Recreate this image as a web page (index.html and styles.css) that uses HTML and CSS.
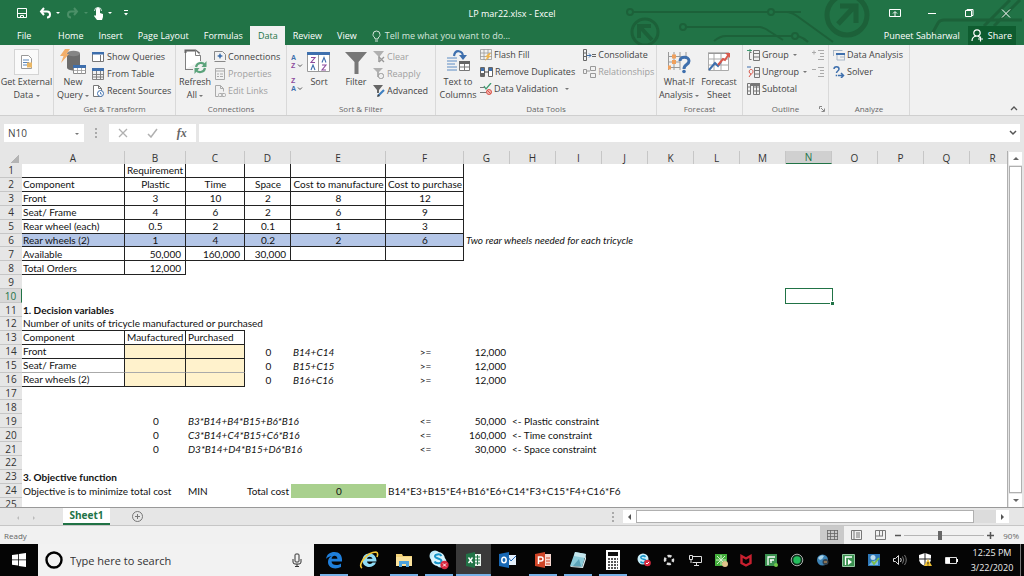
FILE: index.html
```html
<!DOCTYPE html>
<html lang="en">
<head>
<meta charset="utf-8">
<title>LP mar22.xlsx - Excel</title>
<link rel="stylesheet" href="styles.css">
</head>
<body>
<div class="desktop">
  <header class="top">
    <svg class="circuit" width="424" height="45" viewBox="600 0 424 45" fill="none" stroke="#1c6139" stroke-width="2" aria-hidden="true">
      <circle cx="630" cy="12" r="3"/><path d="M633 12h168M804 12"/><circle cx="771" cy="12" r="3" fill="#217346"/><path d="M788 12q5 1 9 4l36 26"/>
      <circle cx="683" cy="27" r="3"/><path d="M686 27h74q5 1 9 4l14 9M714 41q6-5 12-5h66M798 36q6 2 10 6"/><circle cx="795" cy="36" r="3"/>
      <g stroke-width="3"><circle cx="645" cy="32" r="13"/><path d="M652 40l-11-12M639 38V26h12" stroke-width="4"/></g>
      <g stroke-width="5"><circle cx="847" cy="15" r="20"/><path d="M838 24l16-17M840 6h16v17"/></g>
      <path d="M932 34l6-11q2-3 6-3h78M984 26l26-26M994 26l26-26" stroke-width="3"/>
    </svg>
    <div class="titlebar">
      <div class="quick">
        <button aria-label="Save"><svg width="12" height="12" viewBox="0 0 12 12" fill="none" stroke="#fff"><path d="M1.5 1.500h9v9h-9zM2 6.500h8M4.500 11V8.500h3V11"/></svg></button>
        <button aria-label="Undo"><svg width="22" height="12" viewBox="0 0 22 12" fill="none" stroke="#fff" stroke-width="2"><path d="M5 1L2 4.500 5 8M2 4.500h6c4 0 4 6 0 6"/><path d="M17 5h4l-2 2z" fill="#fff" stroke="none"/></svg></button>
        <button aria-label="Redo"><svg width="22" height="12" viewBox="0 0 22 12" fill="none" stroke="#4b9068" stroke-width="2"><path d="M8 1l3 3.500L8 8M11 4.500H5c-4 0-4 6 0 6"/><path d="M18 5h4l-2 2z" fill="#4b9068" stroke="none"/></svg></button>
        <button aria-label="Touch mode"><svg width="20" height="13" viewBox="0 0 20 13" fill="#fff"><path d="M3 2.500a2 2 0 0 1 4 0V6l3 1v3l-1 3H4L1 9l1-1 1 1z"/><path d="M1.500 4a3.500 3.500 0 0 1 7 0" fill="none" stroke="#fff" stroke-width=".8"/><path d="M15 5h4l-2 2z"/></svg></button>
        <button aria-label="Customize toolbar"><svg width="6" height="8" viewBox="0 0 6 8" fill="#fff"><path d="M1 1h4v1H1zM1 4h4L3 6.500z"/></svg></button>
      </div>
      <h1 class="title">LP mar22.xlsx - Excel</h1>
      <div class="window-buttons">
        <button aria-label="Ribbon display options"><svg width="12" height="10" viewBox="0 0 12 10" fill="none" stroke="#fff"><path d="M.5 1.500h11v7H.5zM6 8V4M4 5.500l2-2 2 2"/></svg></button>
        <button aria-label="Minimize"><svg width="10" height="10" viewBox="0 0 10 10"><path d="M1 5.500h8" stroke="#fff"/></svg></button>
        <button aria-label="Restore"><svg width="10" height="10" viewBox="0 0 10 10" fill="none" stroke="#fff"><path d="M1.500 2.500h6v6h-6zM3 2.500v-1h6v6H8"/></svg></button>
        <button aria-label="Close"><svg width="10" height="10" viewBox="0 0 10 10" stroke="#fff"><path d="M1 1.500l8 8M9 1.500l-8 8"/></svg></button>
      </div>
    </div>
    <nav class="tabs">
      <button class="tab file">File</button>
      <button class="tab">Home</button>
      <button class="tab">Insert</button>
      <button class="tab">Page Layout</button>
      <button class="tab">Formulas</button>
      <button class="tab active">Data</button>
      <button class="tab">Review</button>
      <button class="tab">View</button>
      <button class="tab tell"><svg width="9" height="12" viewBox="0 0 9 12" fill="none" stroke="#d5e6dc"><path d="M3 9V8C1.500 6.500 1 6 1 4.500a3.500 3.500 0 0 1 7 0C8 6 7.500 6.500 6 8v1zM3 11h3"/></svg>Tell me what you want to do...</button>
      <span class="user">Puneet Sabharwal</span>
      <button class="share"><svg width="13" height="13" viewBox="0 0 13 13" fill="none" stroke="#fff" stroke-width="1.200"><circle cx="6" cy="4" r="3.200"/><path d="M1 12q0-4 4-5M7 7l2 1.500M9.500 7.500v5M7 10h5"/></svg>Share</button>
    </nav>
  </header>

  <section class="ribbon" aria-label="Data ribbon">
    <div class="group g-external">
      <div class="tools">
        <button class="big"><span class="frame"><svg width="13" height="16" viewBox="0 0 13 16" fill="none" stroke="#999"><path d="M1.500 1.500h7l3 3v10h-10z" fill="#fff"/><path d="M3 6h6M3 8.500h6M3 11h4" stroke="#5b86b8"/><path d="M7 8.500h5v5H7z" fill="#eab765" stroke="none"/></svg></span><span>Get External<br>Data <i class="caret"></i></span></button>
      </div>
    </div>
    <div class="group g-transform">
      <div class="tools">
        <button class="big"><svg width="28" height="26" viewBox="0 0 28 26"><path d="M8 4.500v14c0 4 13 4 13 0v-14z" fill="#6d6d6d"/><ellipse cx="14.500" cy="4.500" rx="6.500" ry="2.700" fill="#858585"/><path d="M6 0h5L7.500 5H10L2 14l2.500-7H1z" fill="#f2ae6a"/><path d="M14.500 16.500h12v8h-12z" fill="#fff" stroke="#8a8a8a"/><path d="M14 16h13v3H14z" fill="#3e6fad"/><path d="M18.500 19v6M22.500 19v6M15 21.500h12" stroke="#999" stroke-width=".8"/></svg><span>New<br>Query <i class="caret"></i></span></button>
        <div class="column">
          <button class="small"><svg width="13" height="12" viewBox="0 0 13 12" fill="none"><path d="M.5 1.500h11v9H.5z" fill="#fff" stroke="#777"/><path d="M0 1h12v2.500H0z" fill="#3e6fad"/><path d="M8.500 4v6" stroke="#777"/></svg>Show Queries</button>
          <button class="small"><svg width="13" height="12" viewBox="0 0 13 12" fill="none"><path d="M.5 1.500h11v10H.5zM4.500 2v9M8.500 2v9M1 6.500h11M1 9h11" stroke="#777" stroke-width=".9"/><path d="M0 0h12v3H0z" fill="#3e6fad"/></svg>From Table</button>
          <button class="small"><svg width="13" height="12" viewBox="0 0 13 12" fill="#fff" stroke="#777"><path d="M1.500.5h5l3 3v8h-8zM6.500.5v3h3"/><circle cx="8.500" cy="8.500" r="3" stroke="#3e6fad"/><path d="M8.500 7v2H10" stroke="#3e6fad" stroke-width=".8"/></svg>Recent Sources</button>
        </div>
      </div>
      <h2>Get &amp; Transform</h2>
    </div>
    <div class="group g-connections">
      <div class="tools">
        <button class="big"><svg width="26" height="26" viewBox="0 0 26 26" fill="#fff" stroke="#808080"><path d="M3.500 20V1.500h10l5 5V12M3 20.500h8"/><path d="M3.500 4V1.500h10l4 3" fill="none" stroke="#666" stroke-width="2"/><path d="M13.500 1.500v5h5"/><g fill="none" stroke="#5ba37b" stroke-width="2.200"><path d="M14 18c1-5 7-5 9-2M23 19c-1 5-7 5-9 2"/></g><path d="M24.500 12v6h-5zM12.500 25v-6h5z" fill="#5ba37b" stroke="none"/></svg><span>Refresh<br>All <i class="caret"></i></span></button>
        <div class="column">
          <button class="small"><svg width="12" height="12" viewBox="0 0 12 12" fill="none"><path d="M.5 9V.5h8l3 3V9M.5 10.500h11" stroke="#888"/><path d="M6 2l1 2 2 1-2 1-1 2-1-2-2-1 2-1z" fill="#3e6fad"/></svg>Connections</button>
          <button class="small off"><svg width="12" height="12" viewBox="0 0 12 12" fill="none" stroke="#aaa"><path d="M1.500.5h9v11h-9zM1 3h9" /><path d="M3 6h2M6 6h3M3 8.500h2M6 8.500h3"/></svg>Properties</button>
          <button class="small off"><svg width="12" height="12" viewBox="0 0 12 12" fill="none" stroke="#aaa"><path d="M1.500.5h5l3 3v3M1.500.5v11h3M6.500.5v3h3"/><rect x="4.500" y="8.500" width="4" height="3" rx="1"/><rect x="7.500" y="8.500" width="4" height="3" rx="1"/></svg>Edit Links</button>
        </div>
      </div>
      <h2>Connections</h2>
    </div>
    <div class="group g-sort">
      <div class="tools">
        <div class="orders">
          <button aria-label="Sort A to Z"><svg width="12" height="17" viewBox="0 0 12 17"><text x="0" y="7" fill="#3e6fad">A</text><text x="0" y="15" fill="#8c4a9c">Z</text><path d="M7 11.500l2 2 2-2" fill="none" stroke="#555"/></svg></button>
          <button aria-label="Sort Z to A"><svg width="12" height="17" viewBox="0 0 12 17"><text x="0" y="7" fill="#8c4a9c">Z</text><text x="0" y="15" fill="#3e6fad">A</text><path d="M7 11.500l2 2 2-2" fill="none" stroke="#555"/></svg></button>
        </div>
        <button class="big sort"><svg width="24" height="26" viewBox="0 0 24 26"><path d="M.5 3.500h22v19H.5zM11.500 4v18" fill="#fff" stroke="#9a9a9a"/><path d="M0 3h23v3H0z" fill="#3e6fad"/><g fill="none" stroke-width="1.100"><path d="M4 8.500h4l-4 5h4M15 16h4l-4 5h4" stroke="#8c4a9c"/><path d="M4 21l2-5 2 5M15 13.500l2-5 2 5" stroke="#3e6fad"/></g></svg><span>Sort</span></button>
        <button class="big filter"><svg width="24" height="26" viewBox="0 0 24 26"><path d="M1 3h22l-8.500 10v12h-4V13z" fill="#777"/></svg><span>Filter</span></button>
        <div class="column">
          <button class="small off"><svg width="12" height="12" viewBox="0 0 12 12"><path d="M0 0h11L7 5v6H5V5z" fill="#b0b0b0"/><path d="M6 6l5 5M11 6l-5 5" stroke="#999" stroke-width="1.300"/></svg>Clear</button>
          <button class="small off"><svg width="12" height="12" viewBox="0 0 12 12"><path d="M0 0h10L6 4v5H4V4z" fill="#b0b0b0"/><rect x="5.500" y="5.500" width="5" height="5" rx="2" fill="#eee" stroke="#999"/></svg>Reapply</button>
          <button class="small"><svg width="12" height="12" viewBox="0 0 12 12"><path d="M0 0h10L6 5v3H4V5z" fill="#666"/><path d="M11 5l-6 6" stroke="#3e7fc0" stroke-width="2.200"/><path d="M5 9l-1 3 3-1z" fill="#444"/></svg>Advanced</button>
        </div>
      </div>
      <h2>Sort &amp; Filter</h2>
    </div>
    <div class="group g-tools">
      <div class="tools">
        <button class="big"><svg width="26" height="26" viewBox="0 0 26 26" fill="none"><path d="M2 9h10M2 12h10M2 15h8M2 18h10M2 21h10" stroke="#5c8cc4"/><path d="M9 7c1-7 9-6 9 1" stroke="#3e6fad" stroke-width="2.200"/><path d="M14 6h8l-4 5z" fill="#3e6fad"/><path d="M14.500 13.500h10v8h-10zM19.500 14v7M15 18h10" fill="#fff" stroke="#777"/><path d="M14 12h11v3H14z" fill="#666"/></svg><span>Text to<br>Columns</span></button>
        <div class="column tight">
          <button class="small"><svg width="12" height="12" viewBox="0 0 12 12" fill="none" stroke="#999"><path d="M.5.500h11v10H.500zM4 0v11M8 0v11M0 4h12M0 7.500h12" stroke-width=".8"/><path d="M9 4l-4 4h2l-2 4 6-5H9l2-3z" fill="#eeb44f" stroke="none"/></svg>Flash Fill</button>
          <button class="small"><svg width="13" height="12" viewBox="0 0 13 12"><path d="M.5 1.500h4v9h-4zM8.500 1.500h4v9h-4z" fill="#fff" stroke="#666"/><path d="M1 2h3v3H1zM9 2h3v3H9z" fill="#3e6fad"/><path d="M1 7h3v3H1z" fill="#666"/><path d="M4 6h5" stroke="#444"/></svg>Remove Duplicates</button>
          <button class="small"><svg width="12" height="12" viewBox="0 0 12 12" fill="none"><path d="M0 4.500h5M0 9.500h6" stroke="#777"/><path d="M4 3l2 3 5-6" stroke="#3f9b71" stroke-width="1.300"/><circle cx="9" cy="9" r="2.500" fill="#f4b6b0" stroke="#d8544b"/><path d="M7 7l4 4" stroke="#d8544b"/></svg>Data Validation&nbsp;&nbsp;<i class="caret"></i></button>
        </div>
        <div class="column tight">
          <button class="small"><svg width="13" height="12" viewBox="0 0 13 12" fill="none"><path d="M.5.500h3v11h-3zM1 4h3M1 7.500h3M9 5.500h4M9 7.500h4" stroke="#666"/><path d="M4 6.500h4M6 4.500l2 2-2 2" stroke="#3e6fad"/></svg>Consolidate</button>
          <button class="small off"><svg width="13" height="12" viewBox="0 0 13 12" fill="none" stroke="#999"><path d="M.5 3.500h3v4h-3zM7.500.500h5v4h-5zM7.500 7.500h5v4h-5zM4 5h3"/></svg>Relationships</button>
        </div>
      </div>
      <h2>Data Tools</h2>
    </div>
    <div class="group g-forecast">
      <div class="tools">
        <button class="big"><svg width="26" height="26" viewBox="0 0 26 26" fill="none"><path d="M2.500 3v18M8 3v18M14 3v18M20 3v7M2 7.500h19M2 13h12M2 18.500h12" stroke="#999"/><path d="M6 5.500h4v4H6zM6 11h4v4H6zM2 16.500h3v4H2z" fill="#f0a05c"/><path d="M14 12c0-5 9-5 9 0 0 4-5 3-5 8" stroke="#3e6fad" stroke-width="3"/><circle cx="18" cy="22.500" r="1.800" fill="#3e6fad"/></svg><span>What-If<br>Analysis <i class="caret"></i></span></button>
        <button class="big"><svg width="24" height="26" viewBox="0 0 24 26" fill="none"><path d="M1.500 4.500h20v17h-20zM7 5v16M14 5v16M2 10h20M2 16h20" fill="#fff" stroke="#aaa"/><path d="M1 4h21" stroke="#888"/><path d="M2 21l6-7 3 3 3-4" stroke="#3e6fad" stroke-width="2"/><path d="M11 16l5-6 2 1 4-6" stroke="#d9594c" stroke-width="2"/><path d="M18 4h5v5z" fill="#d9594c"/></svg><span>Forecast<br>Sheet</span></button>
      </div>
      <h2>Forecast</h2>
    </div>
    <div class="group g-outline">
      <div class="tools">
        <div class="column tight">
          <button class="small"><svg width="13" height="12" viewBox="0 0 13 12" fill="none" stroke="#777"><path d="M6.500 1.500h6v10h-6zM6 4.500h6M6 8h6M4.500 3.500h-2v7h2"/><path d="M0 1.500h5M3 0v3" stroke="#3f9b71"/></svg>Group&nbsp; <i class="caret"></i></button>
          <button class="small"><svg width="13" height="12" viewBox="0 0 13 12" fill="none" stroke="#777"><path d="M7.500 1.500h5v10h-5zM7 4.500h5M7 8h5"/><path d="M0 1h4" stroke="#3e6fad"/><path d="M2 11l2-3C1 7 2 3 4.500 3.500S6 8 4 8" stroke="#d9594c"/></svg>Ungroup&nbsp; <i class="caret"></i></button>
          <button class="small"><svg width="13" height="12" viewBox="0 0 13 12" fill="none" stroke="#777"><path d="M.5.500h3v11h-3zM1 4h3M1 8h3M6.500.500h6v11h-6zM9.500 3v9M6 4h7M6 8h7"/><path d="M4 0h9v3H4z" fill="#777" stroke="none"/></svg>Subtotal</button>
        </div>
        <div class="column tight detail">
          <button class="small" aria-label="Show detail"><svg width="12" height="12" viewBox="0 0 12 12" stroke="#aaa"><path d="M0 3.500h4M2 1.500v4M6 1.500h6M8 4.500h4M8 7.500h4M6 10.500h6"/></svg></button>
          <button class="small" aria-label="Hide detail"><svg width="12" height="12" viewBox="0 0 12 12" stroke="#aaa"><path d="M0 3.500h4M6 1.500h6M8 4.500h4M8 7.500h4M6 10.500h6"/></svg></button>
        </div>
      </div>
      <h2>Outline</h2>
      <button class="launcher" aria-label="Outline settings"><svg width="6" height="6" viewBox="0 0 6 6" stroke="#888" fill="none"><path d="M.500 3V.500H3M2 2l3 3M5.500 2.500v3h-3"/></svg></button>
    </div>
    <div class="group g-analyze">
      <div class="tools">
        <div class="column tight">
          <button class="small"><svg width="12" height="12" viewBox="0 0 12 12" fill="none"><path d="M.500 1.500h9M.500 1v6M4 4v7M4 11h8M11.500 5v6M7 8h4" stroke="#a9b8c8"/><path d="M3 4h9v2H3z" fill="#3e6fad"/></svg>Data Analysis</button>
          <button class="small"><svg width="12" height="12" viewBox="0 0 12 12" fill="none" stroke="#3e6fad" stroke-width="1.500"><path d="M1 3c0-3 5-3 5 0 0 2-2.500 2-2.500 4M2.700 9.500h1.500M5 9.500h5M8 7l2.500 2.500L8 12"/></svg>Solver</button>
        </div>
      </div>
      <h2>Analyze</h2>
    </div>
    <button class="collapse" aria-label="Collapse ribbon"><svg width="8" height="6" viewBox="0 0 8 6" fill="none" stroke="#555" stroke-width="1.300"><path d="M1 5l3-3 3 3"/></svg></button>
  </section>

  <section class="formula-bar">
    <div class="name-box"><input aria-label="Name box" value="N10"><button aria-label="Open names"><i class="caret"></i></button></div>
    <span class="dots" aria-hidden="true"></span>
    <div class="entry">
      <button aria-label="Cancel"><svg width="10" height="10" viewBox="0 0 10 10" stroke="#b0b0b0" stroke-width="1.300"><path d="M1 1l8 8M9 1L1 9"/></svg></button>
      <button aria-label="Enter"><svg width="11" height="10" viewBox="0 0 11 10" fill="none" stroke="#b0b0b0" stroke-width="1.500"><path d="M1 6l3 3 6-8"/></svg></button>
      <button class="fx" aria-label="Insert function">fx</button>
    </div>
    <div class="formula"><input aria-label="Formula"><button aria-label="Expand formula bar"><svg width="8" height="6" viewBox="0 0 8 6" fill="none" stroke="#555" stroke-width="1.500"><path d="M1 1l3 3 3-3"/></svg></button></div>
  </section>

  <main class="workbook">
    <div class="viewport">
      <table class="sheet">
        <colgroup><col class="w-head"><col class="w-a"><col class="w-b"><col class="w-c"><col class="w-d"><col class="w-e"><col class="w-f"><col class="w-std" span="12"></colgroup>
        <thead><tr><th class="corner"></th><th>A</th><th>B</th><th>C</th><th>D</th><th>E</th><th>F</th><th>G</th><th>H</th><th>I</th><th>J</th><th>K</th><th>L</th><th>M</th><th class="current">N</th><th>O</th><th>P</th><th>Q</th><th>R</th></tr></thead>
        <tbody>
          <tr class="boxed"><th>1</th><td></td><td>Requirement</td><td></td><td></td><td></td><td></td></tr>
          <tr class="boxed mid"><th>2</th><td>Component</td><td>Plastic</td><td>Time</td><td>Space</td><td>Cost to manufacture</td><td>Cost to purchase</td></tr>
          <tr class="boxed mid"><th>3</th><td>Front</td><td>3</td><td>10</td><td>2</td><td>8</td><td>12</td></tr>
          <tr class="boxed mid"><th>4</th><td>Seat/ Frame</td><td>4</td><td>6</td><td>2</td><td>6</td><td>9</td></tr>
          <tr class="boxed mid"><th>5</th><td>Rear wheel (each)</td><td>0.5</td><td>2</td><td>0.1</td><td>1</td><td>3</td></tr>
          <tr class="boxed mid blue"><th>6</th><td>Rear wheels (2)</td><td>1</td><td>4</td><td>0.2</td><td>2</td><td>6</td><td class="note formula-text">Two rear wheels needed for each tricycle</td></tr>
          <tr class="boxed"><th>7</th><td>Available</td><td class="num">50,000</td><td class="num">160,000</td><td class="num">30,000</td><td></td><td></td></tr>
          <tr class="boxed"><th>8</th><td>Total Orders</td><td class="num">12,000</td></tr>
          <tr><th>9</th></tr>
          <tr class="current"><th>10</th><td colspan="13"></td><td class="selected"><span class="handle"></span></td></tr>
          <tr><th>11</th><td class="strong">1. Decision variables</td></tr>
          <tr class="above-box"><th>12</th><td>Number of units of tricycle manufactured or purchased</td><td></td><td></td></tr>
          <tr class="boxed"><th>13</th><td>Component</td><td>Maufactured</td><td>Purchased</td></tr>
          <tr class="vars"><th>14</th><td>Front</td><td class="cream"></td><td class="cream"></td><td class="center">0</td><td class="formula-text">B14+C14</td><td class="center">&gt;=</td><td class="num">12,000</td></tr>
          <tr class="vars soft"><th>15</th><td>Seat/ Frame</td><td class="cream"></td><td class="cream"></td><td class="center">0</td><td class="formula-text">B15+C15</td><td class="center">&gt;=</td><td class="num">12,000</td></tr>
          <tr class="vars"><th>16</th><td>Rear wheels (2)</td><td class="cream"></td><td class="cream"></td><td class="center">0</td><td class="formula-text">B16+C16</td><td class="center">&gt;=</td><td class="num">12,000</td></tr>
          <tr><th>17</th></tr>
          <tr><th>18</th></tr>
          <tr><th>19</th><td></td><td class="center">0</td><td class="formula-text" colspan="3">B3*B14+B4*B15+B6*B16</td><td class="center">&lt;=</td><td class="num">50,000</td><td>&lt;- Plastic constraint</td></tr>
          <tr><th>20</th><td></td><td class="center">0</td><td class="formula-text" colspan="3">C3*B14+C4*B15+C6*B16</td><td class="center">&lt;=</td><td class="num">160,000</td><td>&lt;- Time constraint</td></tr>
          <tr><th>21</th><td></td><td class="center">0</td><td class="formula-text" colspan="3">D3*B14+D4*B15+D6*B16</td><td class="center">&lt;=</td><td class="num">30,000</td><td>&lt;- Space constraint</td></tr>
          <tr><th>22</th></tr>
          <tr><th>23</th><td class="strong">3. Objective function</td></tr>
          <tr><th>24</th><td colspan="2">Objective is to minimize total cost</td><td>MIN</td><td>Total cost</td><td class="center green">0</td><td>B14*E3+B15*E4+B16*E6+C14*F3+C15*F4+C16*F6</td></tr>
          <tr><th>25</th></tr>
        </tbody>
      </table>
    </div>
    <div class="vscroll">
      <button aria-label="Scroll up"><i class="caret up"></i></button>
      <div class="thumb"></div>
      <button aria-label="Scroll down"><i class="caret down"></i></button>
    </div>
  </main>

  <div class="sheet-bar">
    <div class="sheet-nav"><button aria-label="Previous sheet"><i class="caret left"></i></button><button aria-label="Next sheet"><i class="caret right"></i></button></div>
    <button class="sheet-tab">Sheet1</button>
    <button class="add" aria-label="New sheet"><svg width="11" height="11" viewBox="0 0 11 11" fill="none" stroke="#777"><circle cx="5.500" cy="5.500" r="5"/><path d="M5.500 3v5M3 5.500h5"/></svg></button>
    <span class="dots" aria-hidden="true"></span>
    <div class="hscroll">
      <button aria-label="Scroll left"><i class="caret left"></i></button>
      <div class="thumb"></div>
      <button aria-label="Scroll right"><i class="caret right"></i></button>
    </div>
  </div>

  <footer class="status">
    <span class="ready">Ready</span>
    <button class="view on" aria-label="Normal view"><svg width="11" height="10" viewBox="0 0 11 10" fill="none" stroke="#666"><path d="M0 .500h11M0 3.500h11M0 6.500h11M0 9.500h11M.500 0v10M3.500 0v10M7.500 0v10M10.500 0v10" stroke-width=".8"/></svg></button>
    <button class="view" aria-label="Page layout view"><svg width="11" height="10" viewBox="0 0 11 10" fill="none" stroke="#777"><path d="M.500.500h10v9H.500zM3 .500v9M5 3h4M5 5h4M5 7h4"/></svg></button>
    <button class="view" aria-label="Page break view"><svg width="11" height="10" viewBox="0 0 11 10" fill="none" stroke="#777"><path d="M.500.500h10v9H.500zM4.500 0v6M0 6h8M7.500 0v6"/></svg></button>
    <button class="zoom" aria-label="Zoom out"><svg width="6" height="7" viewBox="0 0 6 7"><path d="M0 3.500h6" stroke="#555" stroke-width="1.500"/></svg></button>
    <input class="slider" type="range" min="0" max="100" value="45" aria-label="Zoom">
    <button class="zoom" aria-label="Zoom in"><svg width="7" height="7" viewBox="0 0 7 7" stroke="#555" stroke-width="1.500"><path d="M0 3.500h7M3.500 0v7"/></svg></button>
    <span class="percent">90%</span>
  </footer>

  <footer class="taskbar">
    <button class="start" aria-label="Start"><svg width="14" height="14" viewBox="0 0 14 14" fill="#fff"><path d="M0 2l6-.8v5.300H0zM6.800 1L14 0v6.500H6.800zM0 7.300h6v5.300L0 11.800zM6.800 7.300H14V14l-7.200-1z"/></svg></button>
    <div class="search">
      <svg width="18" height="18" viewBox="0 0 18 18"><circle cx="9" cy="9" r="7.500" fill="none" stroke="#000" stroke-width="2.400"/></svg>
      <input aria-label="Search" placeholder="Type here to search">
      <button aria-label="Voice search"><svg width="10" height="14" viewBox="0 0 10 14" fill="none" stroke="#333"><rect x="3" y="1" width="4" height="8" rx="1"/><path d="M1 6v3q0 2 2 2h4q2 0 2-2V6M5 11v2M3 13.500h4"/></svg></button>
    </div>
    <div class="apps">
      <button class="app open" aria-label="Edge"><svg width="18" height="18" viewBox="0 0 18 18"><path d="M1 8C2 3 5 1 9.500 1 14.500 1 17 4.500 17 8.500v2H6.500c.3 4 6 4.500 9.500 2v3.500c-6 3-13 1-13-5 0-3 1.500-4.800 3.700-5.700C4 5.600 2 6.500 1 8zm5.600-.3h5.800c0-4-5.500-4-5.800 0z" fill="#1f7fdb"/></svg></button>
      <button class="app" aria-label="Internet Explorer"><svg width="20" height="18" viewBox="0 0 20 18"><path d="M10 2.500c5 0 7.500 3.300 7.500 8H8c.3 3 4.500 3 5.500 1h3.500c-2.300 6.500-13.500 6-13.500-2 0-4 2.500-7 6.500-7zM8 7.800h5.500c-.5-2.800-5.200-2.800-5.500 0z" fill="#8fdcf6"/><path d="M3 17C-2 14 8 1 17 1c2.500.5 1.500 4 1 5" fill="none" stroke="#f4c839" stroke-width="1.600"/></svg></button>
      <button class="app open" aria-label="File Explorer"><svg width="18" height="16" viewBox="0 0 18 16"><path d="M1 2h6l1 2h9v10H1z" fill="#f3d37a"/><path d="M1 5h16v9H1z" fill="#fbe39c"/><path d="M4 9h10v6h-3v-3H7v3H4z" fill="#4ea3dd"/></svg></button>
      <button class="app open" aria-label="Skype"><svg width="20" height="20" viewBox="0 0 20 20"><circle cx="6" cy="6" r="5.500" fill="#bdeafa"/><circle cx="12" cy="12" r="5.500" fill="#bdeafa"/><circle cx="9" cy="9" r="7" fill="#d9f4fd"/><path d="M12.500 6c-1.500-2.500-7-2-6.500.7.300 2 6.500 1.500 6.500 4.200 0 3-6 3-7 .6" fill="none" stroke="#1895c9" stroke-width="2"/><circle cx="15.500" cy="15" r="4.200" fill="#d8283f"/><path d="M14 13.500l3 3M17 13.500l-3 3" stroke="#fff"/></svg></button>
      <button class="app open focus" aria-label="Excel"><svg width="17" height="16" viewBox="0 0 17 16"><path d="M8 2h8v12H8z" fill="#e8f3ec"/><path d="M10 5h5M10 8h5M10 11h5M12.500 3v10" stroke="#217346"/><path d="M1 2l9-2v16l-9-2z" fill="#217346"/><path d="M3.500 5.500l4 5.500M7.500 5.500l-4 5.500" stroke="#fff" stroke-width="1.400"/></svg></button>
      <button class="app" aria-label="Outlook"><svg width="18" height="16" viewBox="0 0 18 16"><path d="M9 3h8v10H9z" fill="#e4effa"/><path d="M9 5l3 4 5-5" fill="none" stroke="#1b66b3"/><path d="M0 2l10-2v16L0 14z" fill="#1768b5"/><ellipse cx="5" cy="8" rx="2.200" ry="2.800" fill="none" stroke="#fff" stroke-width="1.500"/></svg></button>
      <button class="app open" aria-label="PowerPoint"><svg width="17" height="16" viewBox="0 0 17 16"><path d="M8 2h8v12H8z" fill="#f7d8d0"/><path d="M11 6h4M11 9h4M11 12h4" stroke="#cf4427"/><path d="M0 2l10-2v16L0 14z" fill="#cf4427"/><path d="M3.500 12V5H6q2 0 2 2T6 9H4" fill="none" stroke="#fff" stroke-width="1.500"/></svg></button>
      <button class="app open" aria-label="Notepad"><svg width="18" height="18" viewBox="0 0 18 18"><path d="M6 1l11 2-4 13-12-1z" fill="#8ccbd9"/><path d="M6 1l11 2-1 4L5 5z" fill="#c6e7ee"/><path d="M1 15l12 1 4-12 0 4-3 9-12-1z" fill="#dfeef1"/><path d="M10 8l-6 7h8z" fill="#5ba3b8"/></svg></button>
      <button class="app open" aria-label="Calculator"><svg width="14" height="20" viewBox="0 0 14 20"><path d="M0 0h14v20H0z" fill="#fff"/><path d="M2 2h10v4H2z" fill="#111"/><path d="M2 9h10M2 12h10M2 15h10M2 18h10" stroke="#222" stroke-width="1.500" stroke-dasharray="2 1"/></svg></button>
    </div>
    <div class="tray">
      <button aria-label="Skype status"><svg width="14" height="14" viewBox="0 0 14 14"><circle cx="6" cy="6" r="5.500" fill="#c9effb"/><path d="M8.500 4C7 2 3 3 4 5s5 .500 4.500 3-4 2-5 .500" fill="none" stroke="#1895c9" stroke-width="1.500"/><circle cx="10.500" cy="10" r="3.300" fill="#d8283f"/><path d="M9 10l1 1 2-2" fill="none" stroke="#fff"/></svg></button>
      <button aria-label="Sync"><svg width="12" height="12" viewBox="0 0 12 12" fill="none" stroke="#ddd" stroke-width="2.500"><circle cx="6" cy="6" r="4" stroke-dasharray="4 2.300" stroke-dashoffset="2"/></svg></button>
      <button aria-label="Display"><svg width="13" height="12" viewBox="0 0 13 12" fill="none" stroke="#ddd"><path d="M4 2.500h8.500v6H3.500M7.500 9v2M5 11.500h5M.500 1.500h3v4h-3zM2 6v3"/></svg></button>
      <button aria-label="Network tool"><svg width="14" height="14" viewBox="0 0 14 14"><path d="M1 1h12v12H1z" fill="#43ae3c"/><path d="M3 3l8 8M11 3l-8 8M7 2v10M2 7h10" stroke="#d4f2cd"/><circle cx="11" cy="11" r="3" fill="#e2c48d"/></svg></button>
      <button aria-label="McAfee"><svg width="12" height="13" viewBox="0 0 12 13"><path d="M1.500 2l4.500 2.500L10.500 2v7L6 11.500 1.500 9z" fill="none" stroke="#c8202f" stroke-width="2.400"/></svg></button>
      <button aria-label="Player server"><svg width="13" height="13" viewBox="0 0 13 13"><path d="M0 0h12v12H0z" fill="#3b9150"/><path d="M3 11V3h7M5 6h4M6 6v3" fill="none" stroke="#fff" stroke-width="1.300"/><circle cx="11" cy="11" r="2" fill="#71c948"/></svg></button>
      <button aria-label="Recorder"><svg width="14" height="14" viewBox="0 0 14 14"><circle cx="7" cy="7" r="5.800" fill="#102f1d" stroke="#aaa"/><circle cx="7" cy="7" r="3.700" fill="#24bd5c"/></svg></button>
      <button aria-label="Globe"><svg width="14" height="14" viewBox="0 0 14 14"><circle cx="6.500" cy="7" r="5.500" fill="#3d83b5"/><path d="M2 5q3-4 6-2-1 3-4 4z" fill="#a9d2e8"/><circle cx="9.500" cy="9" r="3" fill="#36424d"/><path d="M8 9h3" stroke="#e0a35a"/></svg></button>
      <button aria-label="Player"><svg width="13" height="13" viewBox="0 0 13 13"><path d="M.500.500h12v12H.500z" fill="#3b9150" stroke="#93c8a0"/><path d="M3.500 11V3H10" fill="none" stroke="#fff" stroke-width="1.300"/><path d="M6 5l4 3-4 3z" fill="#fff"/></svg></button>
      <button aria-label="Graphics"><svg width="14" height="14" viewBox="0 0 14 14"><path d="M1 1h12v12H1z" fill="#2f79b8"/><circle cx="6" cy="4.500" r="2.500" fill="#bcdcf0"/><path d="M2 12q4-6 9-4v4z" fill="#7dc0ea"/><path d="M5 8l2 3 5-6" fill="none" stroke="#7cbf4a" stroke-width="1.800"/></svg></button>
      <button aria-label="Volume"><svg width="14" height="12" viewBox="0 0 14 12" fill="none" stroke="#ddd"><path d="M.500 4.500h2l3-3v9l-3-3h-2zM7.500 4q1.500 2 0 4"/><path d="M9.500 2.500q2.500 3.500 0 7M11.500 1q3.500 5 0 10" stroke="#777"/></svg></button>
      <button aria-label="Security"><svg width="13" height="14" viewBox="0 0 13 14"><path d="M6 0l6 2v4q0 5-6 7Q0 11 0 6V2z" fill="#fff"/><path d="M6 0v13M0 6h12" stroke="#222"/><path d="M9 6l4 7H5z" fill="#f2c230"/><path d="M9 9v2M9 11.500v1" stroke="#222"/></svg></button>
      <button aria-label="Battery"><svg width="13" height="9" viewBox="0 0 13 9"><path d="M.500 1.500h11v6H.500z" fill="none" stroke="#ddd"/><path d="M1 2h4v5H1zM11.500 3H13v3h-1.500z" fill="#fff"/></svg></button>
    </div>
    <div class="clock"><time>12:25 PM</time><time>3/22/2020</time></div>
    <button class="peek" aria-label="Show desktop"></button>
  </footer>
</div>
</body>
</html>
```

FILE: styles.css
```css
* {
  box-sizing: border-box;
}

body {
  margin: 0;
  font-family: "Open Sans", "Noto Sans", sans-serif;
  font-size: 9px;
  line-height: 13px;
  color: #444;
}

button,
input {
  margin: 0;
  padding: 0;
  border: 0;
  background: none;
  color: inherit;
  font: inherit;
}

svg {
  display: block;
  flex: none;
}

h1,
h2 {
  margin: 0;
  font-weight: 400;
}

.desktop {
  display: flex;
  flex-direction: column;
  height: 100vh;
  overflow: hidden;
  background: #e6e6e6;
}

.caret {
  display: inline-block;
  vertical-align: middle;
  border: 2px solid transparent;
  border-top-color: #777;
  border-bottom: 0;
}

.caret.up {
  border: 3px solid transparent;
  border-bottom-color: #666;
  border-top: 0;
}

.caret.down {
  border: 3px solid transparent;
  border-top-color: #666;
  border-bottom: 0;
}

.caret.left {
  border: 3px solid transparent;
  border-right-color: #555;
  border-left: 0;
}

.caret.right {
  border: 3px solid transparent;
  border-left-color: #555;
  border-right: 0;
}

/* Title bar and tabs */
.top {
  position: relative;
  background: #217346;
  color: #fff;
}

.circuit {
  position: absolute;
  top: 0;
  right: 0;
}

.titlebar {
  position: relative;
  display: grid;
  grid-template-columns: 1fr auto 1fr;
  align-items: center;
  height: 26px;
}

.quick {
  display: flex;
  align-items: center;
  gap: 5px;
  padding-left: 16px;
}

.quick button:first-child {
  margin-right: 6px;
}

.quick button:last-child {
  margin-left: 5px;
}

.title {
  font-size: 9px;
}

.window-buttons {
  display: flex;
  justify-content: flex-end;
}

.window-buttons button {
  display: flex;
  justify-content: center;
  width: 37px;
}

.tabs {
  position: relative;
  display: flex;
  height: 19px;
  line-height: 19px;
}

.tab {
  padding: 0 7px 0 8px;
}

.tab.file {
  width: 50px;
  text-align: left;
  padding-left: 17px;
}

.tab.active {
  background: #f1f1f1;
  color: #217346;
}

.tab.tell {
  display: flex;
  align-items: center;
  gap: 4px;
  color: #d5e6dc;
}

.user {
  margin-left: auto;
  padding-right: 8px;
}

.share {
  display: flex;
  align-items: center;
  gap: 4px;
  margin-right: 8px;
  padding: 0 4px 0 3px;
  background: #0e5c2f;
}

/* Ribbon */
.ribbon {
  position: relative;
  display: flex;
  height: 71px;
  background: #f1f1f1;
  border-bottom: 1px solid #cfcfcf;
}

.group {
  position: relative;
  display: flex;
  flex-direction: column;
  justify-content: space-between;
  border-right: 1px solid #d9d9d9;
}

.group h2 {
  font-size: 8px;
  line-height: 12px;
  text-align: center;
  color: #666;
}

.g-external { width: 54px; }
.g-transform { width: 122px; }
.g-connections { width: 111px; }
.g-sort { width: 149px; }
.g-tools { width: 221px; }
.g-forecast { width: 86px; }
.g-outline { width: 86px; }
.g-analyze { width: 81px; }

.tools {
  display: flex;
  align-items: flex-start;
}

.big {
  display: flex;
  flex-direction: column;
  align-items: center;
  flex: none;
  width: 38px;
  padding-top: 4px;
  white-space: nowrap;
  line-height: 13px;
}

.g-external .big {
  width: 53px;
}

.g-sort .big {
  width: 32px;
}

.g-sort .filter {
  width: 34px;
  margin-left: 4px;
}

.g-tools .big,
.g-forecast .big {
  width: 44px;
}

.g-forecast .big + .big {
  width: 36px;
}

.frame {
  display: flex;
  align-items: center;
  justify-content: center;
  width: 25px;
  height: 26px;
  background: #fafafa;
  border: 1px solid #d4d4d4;
}

.column {
  display: flex;
  flex-direction: column;
  padding-top: 3px;
}

.column.tight {
  padding-top: 1px;
}

.column + .column {
  margin-left: 8px;
}

.g-outline .column,
.g-analyze .column {
  padding-left: 4px;
}

.g-outline .detail {
  margin-left: auto;
  padding-right: 4px;
}

.small {
  display: flex;
  align-items: center;
  gap: 2px;
  height: 17px;
  white-space: nowrap;
}

.off {
  color: #a0a0a0;
}

.orders {
  display: flex;
  flex-direction: column;
  gap: 6px;
  padding: 8px 0 0 4px;
}

.orders text {
  font-family: "Liberation Sans", sans-serif;
  font-size: 7px;
  font-weight: 700;
}

.launcher {
  position: absolute;
  right: 3px;
  bottom: 3px;
}

.collapse {
  align-self: flex-end;
  margin: 0 6px 4px auto;
}

/* Formula bar */
.formula-bar {
  display: flex;
  align-items: center;
  padding: 8px 4px 9px;
  font-size: 10px;
}

.name-box,
.entry,
.formula {
  display: flex;
  align-items: center;
  height: 18px;
  background: #fff;
}

.name-box {
  width: 80px;
}

.name-box input {
  flex: 1;
  min-width: 0;
  padding-left: 4px;
}

.name-box button {
  width: 14px;
}

.dots {
  width: 2px;
  height: 10px;
  background: repeating-linear-gradient(#aaa 0 2px, transparent 2px 4px);
}

.formula-bar .dots {
  margin: 0 12px 0 11px;
}

.entry {
  justify-content: space-around;
  width: 87px;
  margin-right: 3px;
}

.fx {
  font-family: "Liberation Serif", serif;
  font-style: italic;
  font-weight: 700;
  font-size: 12px;
  color: #666;
}

.formula {
  flex: 1;
}

.formula input {
  flex: 1;
  min-width: 0;
}

.formula button {
  padding-right: 3px;
}

/* Worksheet */
.workbook {
  display: flex;
  flex: 1;
  min-height: 0;
  border-bottom: 1px solid #999;
}

.viewport {
  flex: 1;
  min-width: 0;
  overflow: hidden;
  background: #fff;
  border-right: 1px solid #b0b0b0;
}

.sheet {
  table-layout: fixed;
  width: 1016px;
  height: 361px;
  border-spacing: 0;
  font-family: Lato, "Open Sans", sans-serif;
  font-size: 10px;
  line-height: 12px;
  color: #111;
}

.w-head { width: 22px; }
.w-a { width: 103px; }
.w-b { width: 61px; }
.w-c { width: 59px; }
.w-d { width: 46px; }
.w-e { width: 95px; }
.w-f { width: 78px; }
.w-std { width: 46px; }

.sheet th {
  padding: 0;
  background: #e6e6e6;
  border-right: 1px solid #c6c6c6;
  font-family: "Open Sans", sans-serif;
  font-weight: 400;
  color: #333;
}

.sheet tbody th {
  border-right: 0;
  border-bottom: 1px solid #c6c6c6;
}

.sheet .corner {
  border: 0;
  background: linear-gradient(135deg, transparent 50%, #b4b4b4 50%) no-repeat 10px 3px / 9px 9px #e6e6e6;
}

.sheet thead .current {
  background: #d0d0d0;
  border-bottom: 1px solid #217346;
  color: #217346;
}

.sheet .current th {
  background: #d8d8d8;
  border-right: 1px solid #217346;
  color: #217346;
}

.sheet td {
  padding: 0 1px 0 2px;
  white-space: nowrap;
  border: 0 solid #222;
}

.sheet td:nth-child(2) {
  padding-left: 1px;
}

.boxed td,
.vars td:nth-child(-n+4) {
  border-right-width: 1px;
  border-bottom-width: 1px;
}

.boxed .note {
  border: 0;
}

.above-box td {
  border-bottom-width: 1px;
}

.soft td {
  border-bottom-color: #aaa;
}

.mid td:nth-child(n+3),
.sheet .center {
  text-align: center;
}

.mid .note.note {
  text-align: left;
}

.sheet .num {
  padding-right: 4px;
  text-align: right;
}

.blue td:not(.note) {
  background: #b4c6e7;
}

.sheet .cream {
  background: #fff2cc;
}

.sheet .green {
  background: #a9d08e;
}

.strong {
  font-weight: 700;
}

.formula-text {
  font-style: italic;
}

.selected {
  position: relative;
  outline: 1px solid #217346;
}

.handle {
  position: absolute;
  right: -2px;
  bottom: -2px;
  width: 4px;
  height: 4px;
  background: #217346;
  border: 1px solid #fff;
  border-width: 1px 0 0 1px;
}

.vscroll {
  display: flex;
  flex-direction: column;
  gap: 1px;
  width: 16px;
  padding: 1px 2px 0 1px;
}

.vscroll button,
.hscroll button {
  display: flex;
  align-items: center;
  justify-content: center;
  width: 13px;
  height: 13px;
  background: #fff;
}

.thumb {
  flex: 1;
  background: #fff;
  border: 1px solid #b0b0b0;
}

/* Sheet tabs and horizontal scroll */
.sheet-bar {
  display: flex;
  align-items: center;
  height: 18px;
  border-bottom: 1px solid #c6c6c6;
}

.sheet-nav {
  display: flex;
  gap: 14px;
  width: 63px;
  padding-left: 17px;
}

.sheet-nav .caret {
  border-width: 2px;
  border-left-color: #bbb;
  border-right-color: #bbb;
  border-top-color: transparent;
}

.sheet-nav .left { border-left-width: 0; }
.sheet-nav .right { border-right-width: 0; }

.sheet-tab {
  align-self: stretch;
  width: 47px;
  background: #fff;
  border-bottom: 2px solid #217346;
  color: #217346;
  font-weight: 700;
  font-size: 10px;
}

.add {
  margin-left: 22px;
}

.sheet-bar .dots {
  margin-left: auto;
  margin-right: 9px;
}

.hscroll {
  display: flex;
  width: 386px;
  margin-right: 15px;
  background: #dcdcdc;
}

.hscroll .thumb {
  margin-right: 22px;
}

/* Status bar */
.status {
  display: flex;
  align-items: center;
  height: 18px;
  padding-right: 5px;
  background: #f1f1f1;
  font-size: 8px;
  color: #666;
}

.ready {
  margin-right: auto;
  padding-left: 4px;
}

.view {
  display: flex;
  align-items: center;
  justify-content: center;
  align-self: stretch;
  width: 24px;
}

.view.on {
  background: #cacaca;
}

.zoom {
  margin: 0 3px;
}

.slider {
  width: 80px;
  height: 12px;
  appearance: none;
  background: linear-gradient(#b5b5b5, #b5b5b5) no-repeat center / 100% 1px;
}

.slider::-webkit-slider-thumb {
  appearance: none;
  width: 4px;
  height: 9px;
  background: #666;
}

.percent {
  padding-left: 6px;
}

/* Taskbar */
.taskbar {
  display: flex;
  height: 32px;
  background: #050505;
  color: #eee;
}

.start {
  display: flex;
  align-items: center;
  justify-content: center;
  width: 38px;
}

.search {
  display: flex;
  align-items: center;
  flex: 0 1 276px;
  gap: 7px;
  padding: 0 12px 0 7px;
  background: #f2f2f2;
  color: #333;
  font-size: 11px;
}

.search input {
  flex: 1;
  min-width: 0;
}

.search input::placeholder {
  color: #333;
  opacity: 1;
}

.apps {
  display: grid;
  grid-template-columns: repeat(9, 1fr);
  width: 313px;
  margin: 0 auto 0 3px;
}

.app {
  display: flex;
  align-items: center;
  justify-content: center;
}

.app.open {
  background: linear-gradient(#76b1e6, #76b1e6) no-repeat bottom / 28px 2px;
}

.app.focus {
  background: linear-gradient(#76b1e6, #76b1e6) no-repeat bottom / 100% 2px #3a3a3a;
}

.tray {
  display: grid;
  grid-template-columns: repeat(13, 1fr);
  width: 333px;
}

.tray button {
  display: flex;
  align-items: center;
  justify-content: center;
}

.clock {
  display: flex;
  flex-direction: column;
  justify-content: center;
  width: 56px;
  line-height: 15px;
  text-align: center;
}

.peek {
  width: 4px;
  border-left: 1px solid #777;
}
```
